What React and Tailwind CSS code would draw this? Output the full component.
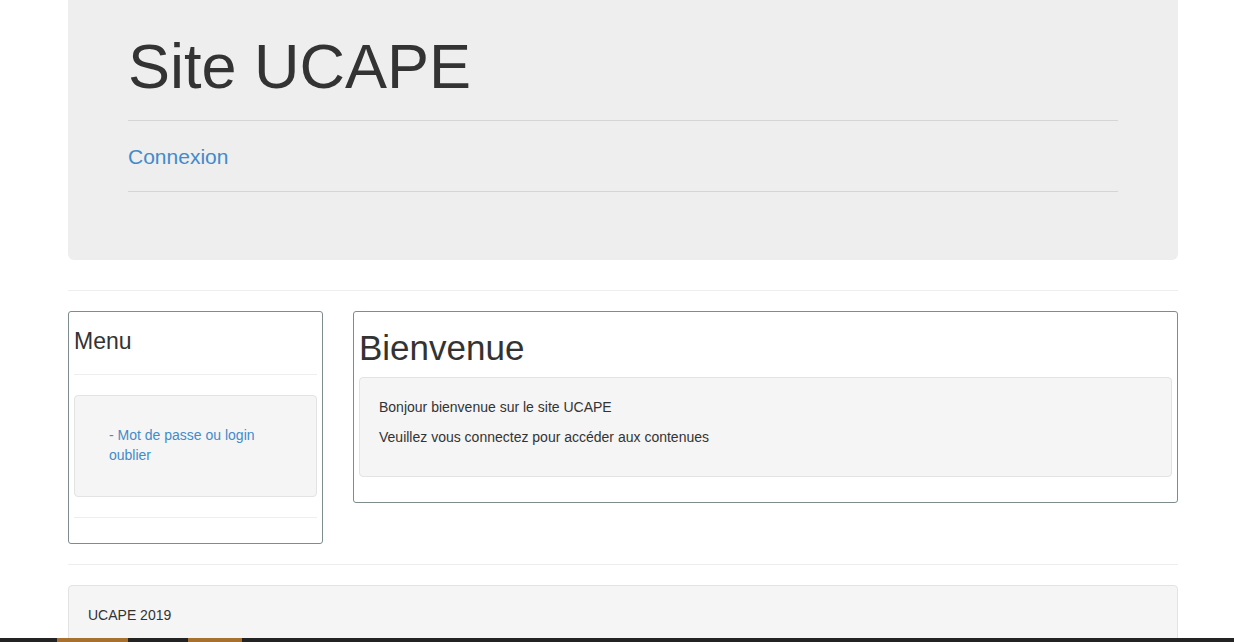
const linkColor = "text-[#428bca]";

const Well = ({ className = "", children }) => (
    <div className={`bg-[#f5f5f5] border border-[#e3e3e3] rounded-[4px] ${className}`}>
        {children}
    </div>
);

const Jumbotron = () => (
    <div className="bg-[#eeeeee] rounded-b-[6px] px-[60px] pt-[32px] pb-[68px]">
        <h1 className="text-[63px] leading-[69px] text-[#333]">Site UCAPE</h1>
        <hr className="mt-[19px] border-t border-[#d5d5d5]" />
        <p className={`mt-[21px] text-[21px] leading-[30px] ${linkColor}`}>
            <a href="#">Connexion</a>
        </p>
        <hr className="mt-[19px] border-t border-[#d5d5d5]" />
    </div>
);

const MenuBox = () => (
    <div className="w-[255px] shrink-0 border border-[#7f8c8d] rounded-[3px] px-[5px] pt-[17px] pb-[25px] self-start">
        <h3 className="text-[23px] leading-[25px] text-[#333]">Menu</h3>
        <hr className="mt-[20px] border-t border-[#eee]" />
        <Well className="mt-[20px] pt-[29px] pb-[31px] pl-[34px] pr-[19px]">
            <ul className={`text-[14px] leading-[20px] ${linkColor}`}>
                <li>
                    <a href="#">- Mot de passe ou login oublier</a>
                </li>
            </ul>
        </Well>
        <hr className="mt-[20px] border-t border-[#eee]" />
    </div>
);

const MainBox = () => (
    <div className="flex-1 border border-[#7f8c8d] rounded-[3px] px-[5px] pt-[17px] pb-[25px] self-start">
        <h2 className="text-[35px] leading-[38px] text-[#333]">Bienvenue</h2>
        <Well className="mt-[10px] pt-[19px] pb-[29px] px-[19px] text-[14px] leading-[20px] text-[#333]">
            <p>Bonjour bienvenue sur le site UCAPE</p>
            <p className="mt-[10px]">Veuillez vous connectez pour accéder aux contenues</p>
        </Well>
    </div>
);

const App = () => {
    return (
        <div
            className="min-h-screen bg-white text-[#333]"
            style={{ fontFamily: '"Liberation Sans", Arial, Helvetica, sans-serif' }}
        >
            <div className="ml-[68px] w-[1110px]">
                <Jumbotron />

                <hr className="mt-[30px] border-t border-[#eee]" />

                <div className="mt-[20px] flex gap-[30px]">
                    <MenuBox />
                    <MainBox />
                </div>

                <hr className="mt-[20px] border-t border-[#eee]" />

                <Well className="mt-[20px] pt-[19px] pb-[19px] px-[19px] text-[14px] leading-[20px]">
                    UCAPE 2019
                </Well>
            </div>

            {/* taskbar strip overlapping the bottom of the window */}
            <div className="fixed left-0 right-0 bottom-0 h-[4px] bg-[#232323] flex">
                <div className="ml-[57px] w-[71px] bg-[#a8702e]" />
                <div className="ml-[60px] w-[54px] bg-[#a8702e]" />
            </div>
        </div>
    );
};

export default App;
